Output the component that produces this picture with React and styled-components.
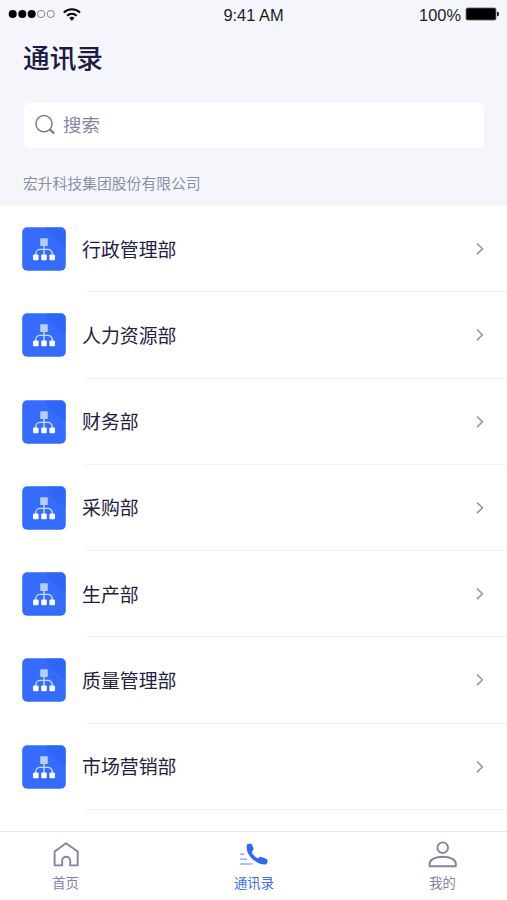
import { useState } from "react";
import styled, { createGlobalStyle } from "styled-components";

const GlobalStyle = createGlobalStyle`
  * {
    box-sizing: border-box;
  }
  body {
    margin: 0;
    background: #ffffff;
    font-family: "Noto Sans CJK SC", sans-serif;
  }
`;

const Container = styled.div`
  width: 100%;
  height: 900px;
  display: flex;
  flex-direction: column;
  overflow: hidden;
  background: #ffffff;
`;

const Header = styled.header`
  height: 206px;
  flex-shrink: 0;
  padding: 0 23px;
  background: #f4f6fb;
`;

const StatusBar = styled.div`
  height: 30px;
  margin: 0 -15px;
  display: grid;
  grid-template-columns: 1fr auto 1fr;
  align-items: center;
  font-family: "Liberation Sans", sans-serif;
  font-size: 16.4px;
  color: #1c1c1e;
`;

const Signal = styled.div`
  display: flex;
  align-items: center;
  height: 30px;
`;

const Battery = styled.div`
  display: flex;
  align-items: center;
  justify-content: flex-end;
  gap: 4px;
`;

const Title = styled.h1`
  margin: 7px 0 0;
  font-size: 26.7px;
  line-height: 40px;
  font-weight: 500;
  color: #1d1b45;
`;

const SearchBox = styled.label`
  height: 45px;
  margin: 25.5px 0 0 1px;
  padding-left: 10px;
  display: flex;
  align-items: center;
  gap: 8px;
  border-radius: 5px;
  background: #ffffff;
`;

const Input = styled.input`
  flex: 1;
  min-width: 0;
  padding: 0 0 2px;
  border: none;
  outline: none;
  background: transparent;
  font-family: inherit;
  font-size: 18.5px;
  color: #1d1b45;
  &::placeholder {
    color: #8487a3;
    opacity: 1;
  }
`;

const Company = styled.p`
  margin: 25px 0 0;
  font-size: 14.8px;
  line-height: 20px;
  color: #8b8fa8;
`;

const List = styled.main`
  flex: 1;
  min-height: 0;
  overflow: hidden;
`;

const Row = styled.div`
  height: 86.25px;
  padding-left: 22px;
  display: flex;
  align-items: center;
  gap: 16px;
  cursor: pointer;
`;

const RowBody = styled.div`
  flex: 1;
  height: 100%;
  padding-right: 22px;
  display: flex;
  align-items: center;
  justify-content: space-between;
  background: linear-gradient(#f3f3f5, #f3f3f5) 2px 100% / 100% 1px no-repeat;
`;

const Name = styled.span`
  padding-bottom: 1px;
  font-size: 18.9px;
  line-height: 28px;
  color: #24213f;
`;

const TabBar = styled.nav`
  height: 69px;
  flex-shrink: 0;
  padding: 0 27px 0 28px;
  display: flex;
  justify-content: space-between;
  border-top: 1px solid #e4e5e9;
  background: #ffffff;
`;

const Tab = styled.button`
  width: 75px;
  padding: 8px 0 0;
  border: none;
  background: none;
  display: flex;
  flex-direction: column;
  align-items: center;
  gap: 3px;
  font-family: inherit;
  font-size: 13.3px;
  line-height: 20px;
  color: ${(props) => (props.$active ? "#3b6ff0" : "#8184a2")};
  cursor: pointer;
`;

const departments = [
  "行政管理部",
  "人力资源部",
  "财务部",
  "采购部",
  "生产部",
  "质量管理部",
  "市场营销部",
];

const SignalIcon = () => (
  <svg width="76" height="30" viewBox="8 0 76 30">
    {[12.7, 22.3, 31.7].map((x) => (
      <circle key={x} cx={x} cy="14" r="4" fill="#000" />
    ))}
    {[41.1, 50.7].map((x) => (
      <circle key={x} cx={x} cy="14" r="3.6" fill="none" stroke="#77787c" strokeWidth="0.9" />
    ))}
    <g fill="none" stroke="#000" strokeWidth="2.1">
      <path d="M63.8 12.5a11.6 11.6 0 0 1 16.2 0" />
      <path d="M67.2 15.7a6.8 6.8 0 0 1 9.4 0" />
    </g>
    <path d="M69.3 18a3.6 3.6 0 0 1 5.2 0l-2.6 2.7z" fill="#000" />
  </svg>
);

const BatteryIcon = () => (
  <svg width="34" height="16" viewBox="0 0 34 16">
    <rect x="1" y="0.9" width="30" height="12.2" rx="1.5" fill="#000" stroke="#77777a" strokeWidth="0.8" />
    <path d="M32.100 4.800h.5a1.300 2.200 0 0 1 0 4.400h-.5z" fill="#000" />
  </svg>
);

const SearchIcon = () => (
  <svg width="21" height="22" viewBox="0 0 21 22" fill="none" stroke="#777a98">
    <circle cx="10" cy="9.7" r="8.1" strokeWidth="1.5" />
    <path d="M15.8 15.4l4.2 4" strokeWidth="2.2" />
  </svg>
);

const OrgIcon = () => (
  <svg width="44" height="44" viewBox="0 0 44 44">
    <rect x="0.2" y="0.2" width="43.6" height="43.6" rx="5" fill="#356cfb" />
    <path d="M24 .2h14.8a5 5 0 0 1 5 5V21C36 17 27 10 24 .2z" fill="#295ff0" opacity="0.4" />
    <rect x="18.2" y="11.3" width="7.6" height="7.6" rx="0.6" fill="#b7cbff" />
    <path
      d="M22 18.8v9M13.7 28v-1.2a4.4 4.4 0 0 1 4.4-4.4h7.8a4.4 4.4 0 0 1 4.4 4.4V28"
      fill="none"
      stroke="#c9d8ff"
      strokeWidth="1.4"
    />
    <g fill="#fff">
      <rect x="11" y="27.4" width="5.6" height="5.9" rx="1.2" />
      <rect x="19.2" y="27.4" width="5.6" height="5.9" rx="1.2" />
      <rect x="27.4" y="27.4" width="5.6" height="5.9" rx="1.2" />
    </g>
  </svg>
);

const ArrowIcon = () => (
  <svg width="10" height="14" viewBox="0 0 10 14" fill="none" stroke="#96979d" strokeWidth="1.6">
    <path d="M2 1.5L7.4 6.8 2 12.1" />
  </svg>
);

const HomeIcon = () => (
  <svg width="30" height="30" viewBox="0 0 30 30" fill="none" stroke="#8083a5" strokeWidth="1.9" strokeLinejoin="round">
    <path d="M3.6 11.6L15 3.2l11.7 8.4v13.8h-7.500v-4.700a4 4 0 0 0-8 0v4.700H3.600z" />
  </svg>
);

const PhoneIcon = () => (
  <svg width="30" height="30" viewBox="0 0 30 30">
    <path
      d="M8 4.300C9 3.500 11.400 3.400 12.500 4.100c1 1.600 1.800 3.400 2.100 5.300.1.900-1.800 1.600-1.800 2.300.5 2.400 3.500 5.400 5.900 6.600.9.2 1.700-1.700 2.700-1.500 2.200.5 4.700 1.400 6.800 2.600.7 1.500.3 4.100-1 4.800-2.600 1.100-6.800-.2-10.100-2.400C11.700 18.500 6.100 11.300 8 4.300z"
      fill="#2f68f6"
    />
    <g stroke="#8fb0fa" strokeWidth="1.5">
      <path d="M1.200 14.300h4M1.200 19.300h6.800M1.200 24h12.400" />
    </g>
  </svg>
);

const UserIcon = () => (
  <svg width="30" height="30" viewBox="0 0 30 30" fill="none" stroke="#8083a5" strokeWidth="1.9">
    <circle cx="14.700" cy="7.700" r="5.300" />
    <path d="M1.600 26.300v-2.500c0-4.300 5.800-7 13.100-7s13.100 2.700 13.100 7v2.500z" strokeLinejoin="round" />
  </svg>
);

const tabs = [
  { id: "home", label: "首页", Icon: HomeIcon },
  { id: "contacts", label: "通讯录", Icon: PhoneIcon },
  { id: "me", label: "我的", Icon: UserIcon },
];

const App = () => {
  const [keyword, setKeyword] = useState("");
  const [active, setActive] = useState("contacts");

  return (
    <Container>
      <GlobalStyle />
      <Header>
        <StatusBar>
          <Signal>
            <SignalIcon />
          </Signal>
          <span>9:41 AM</span>
          <Battery>
            <span>100%</span>
            <BatteryIcon />
          </Battery>
        </StatusBar>
        <Title>通讯录</Title>
        <SearchBox>
          <SearchIcon />
          <Input
            value={keyword}
            onChange={(e) => setKeyword(e.target.value)}
            placeholder="搜索"
          />
        </SearchBox>
        <Company>宏升科技集团股份有限公司</Company>
      </Header>
      <List>
        {departments
          .filter((name) => name.includes(keyword))
          .map((name) => (
            <Row key={name}>
              <OrgIcon />
              <RowBody>
                <Name>{name}</Name>
                <ArrowIcon />
              </RowBody>
            </Row>
          ))}
      </List>
      <TabBar>
        {tabs.map(({ id, label, Icon }) => (
          <Tab key={id} $active={active === id} onClick={() => setActive(id)}>
            <Icon />
            <span>{label}</span>
          </Tab>
        ))}
      </TabBar>
    </Container>
  );
};

export default App;
